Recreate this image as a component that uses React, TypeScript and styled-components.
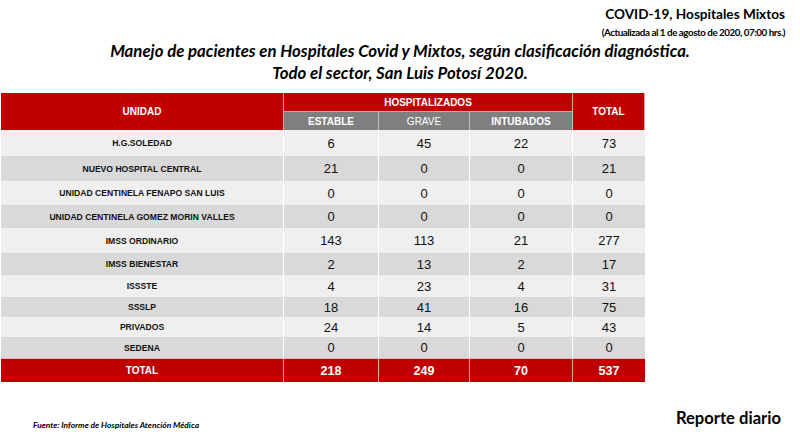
import React from "react";
import styled, { createGlobalStyle } from "styled-components";

const Global = createGlobalStyle`
  html, body { margin: 0; padding: 0; background: #ffffff; }
  body { width: 800px; height: 441px; overflow: hidden; }
`;

const TITLE_FONT = `Lato, "Liberation Sans", Arial, sans-serif`;
const TABLE_FONT = `"Liberation Sans", Arial, sans-serif`;

const Page = styled.div`
  width: 800px;
  height: 441px;
  display: flex;
  flex-direction: column;
  box-sizing: border-box;
`;

const TopRight = styled.div`
  display: flex;
  flex-direction: column;
  align-items: flex-end;
  padding: 5px 15px 0 0;
  font-family: ${TITLE_FONT};
  font-weight: 700;
  color: #000;
`;

const Kicker = styled.div`
  font-size: 13.6px;
  line-height: 18px;
`;

const Updated = styled.div`
  font-size: 9.8px;
  letter-spacing: -0.45px;
  line-height: 18px;
`;

const Title = styled.div`
  font-family: ${TITLE_FONT};
  font-weight: 700;
  font-style: italic;
  font-size: 16.8px;
  line-height: 22px;
  text-align: center;
  color: #000;
  margin-top: -1px;
`;

const Table = styled.div`
  margin: 9px 0 0 1px;
  width: 644px;
  display: grid;
  grid-template-columns: 283px 95px 91px 103px 72px;
  font-family: ${TABLE_FONT};
`;

const HeadCell = styled.div<{ $row?: string; $col?: string; $size?: number; $h?: number }>`
  grid-row: ${(p) => p.$row || "auto"};
  grid-column: ${(p) => p.$col || "auto"};
  ${(p) => (p.$h ? `height: ${p.$h}px;` : "")}
  background: #c00000;
  color: #fff;
  font-weight: 700;
  font-size: ${(p) => p.$size || 9}px;
  display: flex;
  align-items: center;
  justify-content: center;
  border-right: 1px solid #e8a0a0;
  box-sizing: border-box;
  &:last-of-type { border-right: none; }
`;

const SubHead = styled.div<{ $bold?: boolean }>`
  background: #7f7f7f;
  color: #fff;
  font-weight: ${(p) => (p.$bold ? 700 : 400)};
  font-size: 10px;
  height: 19px;
  display: flex;
  align-items: center;
  justify-content: center;
  border-right: 1px solid #bdbdbd;
  border-top: 1px solid #e8a0a0;
  box-sizing: border-box;
`;

const Cell = styled.div<{ $dark: boolean; $h: number; $label?: boolean; $last?: boolean }>`
  height: ${(p) => p.$h}px;
  background: ${(p) => (p.$dark ? "#d9d9d9" : "#efefef")};
  color: #111;
  display: flex;
  align-items: center;
  justify-content: center;
  font-size: ${(p) => (p.$label ? "8.6px" : "13px")};
  font-weight: ${(p) => (p.$label ? 700 : 400)};
  border-right: ${(p) => (p.$last ? "none" : "1px solid #ffffff")};
  box-sizing: border-box;
`;

const TotalCell = styled.div<{ $label?: boolean; $last?: boolean }>`
  height: 24px;
  background: #c00000;
  color: #fff;
  font-weight: 700;
  font-size: ${(p) => (p.$label ? "10px" : "12.5px")};
  display: flex;
  align-items: center;
  justify-content: center;
  border-right: ${(p) => (p.$last ? "none" : "1px solid #e8a0a0")};
  border-top: 1px solid #f0b0b0;
  box-sizing: border-box;
`;

const Footer = styled.div`
  margin-top: auto;
  display: flex;
  justify-content: space-between;
  align-items: flex-end;
  padding: 0 19px 11px 33px;
  font-family: ${TITLE_FONT};
  font-weight: 700;
  color: #000;
`;

const Source = styled.div`
  font-style: italic;
  font-size: 8.4px;
  line-height: 10px;
`;

const Report = styled.div`
  font-size: 16.6px;
  line-height: 20px;
  margin-bottom: 2px;
`;

const rows: { name: string; v: number[]; h: number }[] = [
  { name: "H.G.SOLEDAD", v: [6, 45, 22, 73], h: 26 },
  { name: "NUEVO HOSPITAL CENTRAL", v: [21, 0, 0, 21], h: 25 },
  { name: "UNIDAD  CENTINELA FENAPO SAN LUIS", v: [0, 0, 0, 0], h: 24 },
  { name: "UNIDAD  CENTINELA GOMEZ MORIN VALLES", v: [0, 0, 0, 0], h: 23 },
  { name: "IMSS ORDINARIO", v: [143, 113, 21, 277], h: 25 },
  { name: "IMSS BIENESTAR", v: [2, 13, 2, 17], h: 22 },
  { name: "ISSSTE", v: [4, 23, 4, 31], h: 22 },
  { name: "SSSLP", v: [18, 41, 16, 75], h: 20 },
  { name: "PRIVADOS", v: [24, 14, 5, 43], h: 20 },
  { name: "SEDENA", v: [0, 0, 0, 0], h: 21 },
];

const totals = [218, 249, 70, 537];

export default function App() {
  return (
    <Page>
      <Global />
      <TopRight>
        <Kicker>COVID-19, Hospitales Mixtos</Kicker>
        <Updated>(Actualizada al 1 de agosto de 2020, 07:00 hrs.)</Updated>
      </TopRight>
      <Title>
        Manejo de pacientes en Hospitales Covid y Mixtos, según clasificación diagnóstica.
        <br />
        Todo el sector, San Luis Potosí 2020.
      </Title>
      <Table>
        <HeadCell $row="1 / span 2" $col="1" $size={10}>UNIDAD</HeadCell>
        <HeadCell $row="1" $col="2 / span 3" $size={10} $h={18}>HOSPITALIZADOS</HeadCell>
        <HeadCell $row="1 / span 2" $col="5" $size={10}>TOTAL</HeadCell>
        <SubHead $bold>ESTABLE</SubHead>
        <SubHead>GRAVE</SubHead>
        <SubHead $bold>INTUBADOS</SubHead>
        {rows.map((r, i) => (
          <React.Fragment key={r.name}>
            <Cell $dark={i % 2 === 1} $h={r.h} $label>{r.name}</Cell>
            {r.v.map((n, j) => (
              <Cell key={j} $dark={i % 2 === 1} $h={r.h} $last={j === 3}>{n}</Cell>
            ))}
          </React.Fragment>
        ))}
        <TotalCell $label>TOTAL</TotalCell>
        {totals.map((n, j) => (
          <TotalCell key={j} $last={j === 3}>{n}</TotalCell>
        ))}
      </Table>
      <Footer>
        <Source>Fuente: Informe de Hospitales  Atención  Médica</Source>
        <Report>Reporte diario</Report>
      </Footer>
    </Page>
  );
}
